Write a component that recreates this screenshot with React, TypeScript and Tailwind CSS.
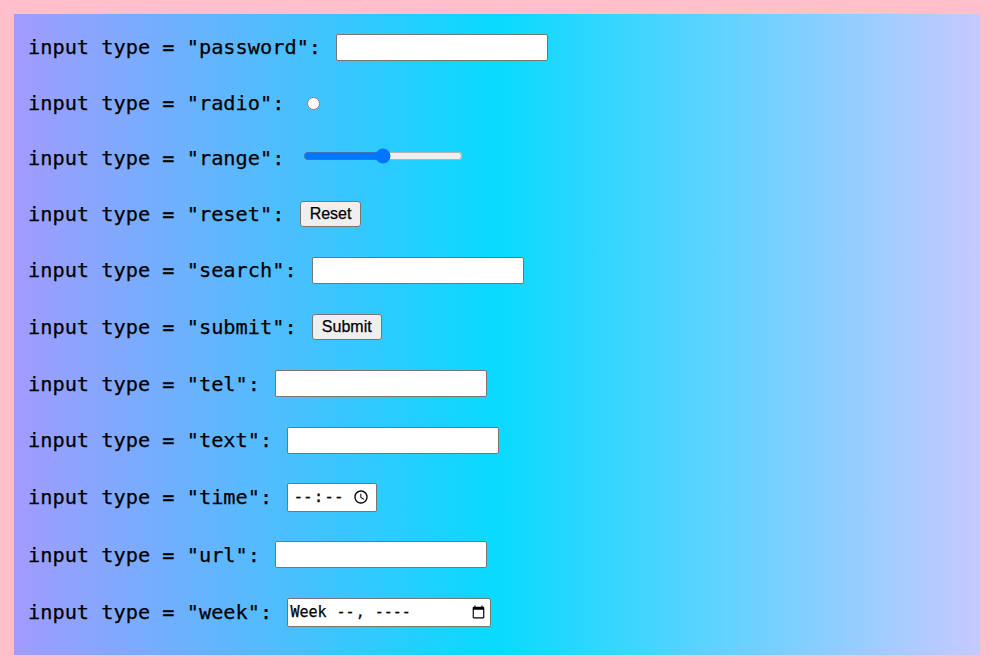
import React from 'react';

const mono = "font-['DejaVu_Sans_Mono',monospace]";
const textBox =
  'w-[212px] h-[27px] bg-white border border-[#767676] rounded-[2px] px-[2px] text-[15px] outline-none';
const btn =
  "h-[26px] px-[9px] bg-[#efefef] border border-[#767676] rounded-[3px] text-[16px] text-black font-['Liberation_Sans',Arial,sans-serif]";

const Row: React.FC<{ label: string; h: string; children: React.ReactNode }> = ({ label, h, children }) => (
  <div className={`flex items-center ${h}`}>
    <span className="whitespace-pre">{`input type = "${label}": `}</span>
    {children}
  </div>
);

const App: React.FC = () => {
  return (
    <div className="min-h-screen bg-[#ffc0cb] p-[14px]">
      <div
        className={`bg-[linear-gradient(to_right,#a29bfe,#08dafe_50%,#c7c9ff)] pl-[14px] pt-[5px] pb-[14.5px] text-black text-[20.3px] [-webkit-text-stroke:0.25px_black] ${mono}`}
      >
        <Row label="password" h="h-[56px]">
          <input type="password" className={`${textBox} ml-[3px]`} />
        </Row>
        <Row label="radio" h="h-[56px]">
          <input type="radio" className="ml-[10px] w-[13px] h-[13px]" />
        </Row>
        <Row label="range" h="h-[55px]">
          <input type="range" className="ml-[6px] mb-[6px] w-[160px]" />
        </Row>
        <Row label="reset" h="h-[55.5px]">
          <button className={`${btn} ml-[3px]`}>Reset</button>
        </Row>
        <Row label="search" h="h-[57px]">
          <input type="search" className={`${textBox} ml-[3px]`} />
        </Row>
        <Row label="submit" h="h-[57px]">
          <button className={`${btn} ml-[3px]`}>Submit</button>
        </Row>
        <Row label="tel" h="h-[56.5px]">
          <input type="tel" className={`${textBox} ml-[3px]`} />
        </Row>
        <Row label="text" h="h-[56.5px]">
          <input type="text" className={`${textBox} ml-[3px]`} />
        </Row>
        <Row label="time" h="h-[57.5px]">
          <input type="time" className="w-[90px] h-[29px] bg-white border border-[#767676] rounded-[2px] px-[4px] text-[16px] ml-[3px]" />
        </Row>
        <Row label="url" h="h-[57.5px]">
          <input type="url" className={`${textBox} ml-[3px]`} />
        </Row>
        <Row label="week" h="h-[57px]">
          <input type="week" className="w-[204px] h-[29px] bg-white border border-[#767676] rounded-[2px] px-[2px] text-[15px] ml-[3px]" />
        </Row>
      </div>
    </div>
  );
};

export default App;
